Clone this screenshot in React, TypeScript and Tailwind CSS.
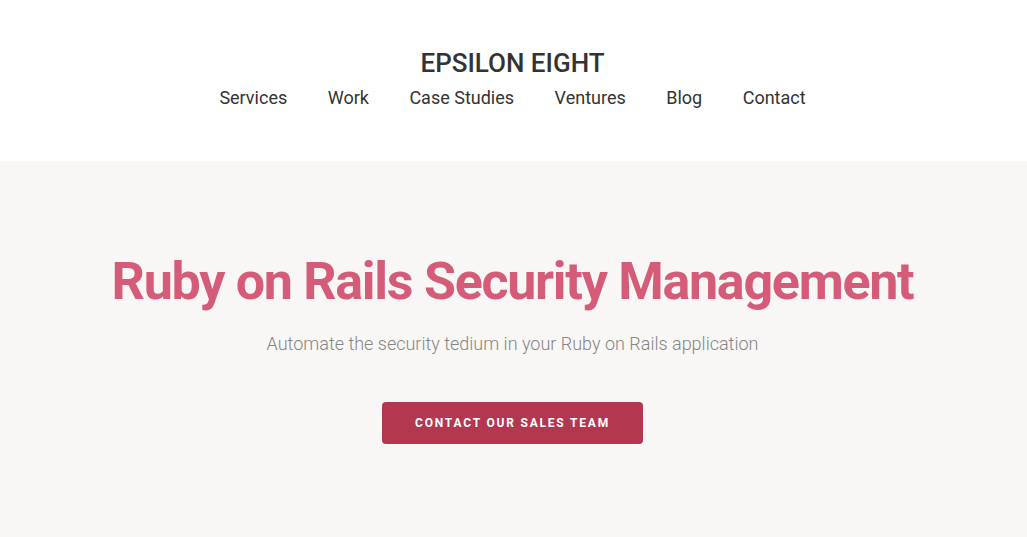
export default function App() {
  const nav = ['Services', 'Work', 'Case Studies', 'Ventures', 'Blog', 'Contact'];
  return (
    <div className="min-h-[537px] bg-[#f9f7f6] font-['Roboto',sans-serif]">
      <header className="bg-white h-[161px] flex flex-col items-center pt-[46px] pr-[2px]">
        <h1 className="text-[26px] leading-[34px] font-medium text-[#333333]">EPSILON EIGHT</h1>
        <nav className="flex gap-[40.5px] mt-[5px]">
          {nav.map((n) => (
            <a key={n} href="#" className="text-[18px] leading-[26px] text-[#333333]">
              {n}
            </a>
          ))}
        </nav>
      </header>
      <section className="flex flex-col items-center pt-[89px] pr-[2px]">
        <h2 className="text-[52px] leading-[64px] font-bold tracking-[-1.28px] text-[#d45c79]">
          Ruby on Rails Security Management
        </h2>
        <p className="mt-[17px] text-[18px] leading-[26px] font-light text-[#858585]">
          Automate the security tedium in your Ruby on Rails application
        </p>
        <button
          type="button"
          className="mt-[45px] w-[261px] h-[42px] rounded bg-[#b3374f] text-white text-[12px] font-bold tracking-[1.8px]"
        >
          CONTACT OUR SALES TEAM
        </button>
      </section>
    </div>
  );
}
